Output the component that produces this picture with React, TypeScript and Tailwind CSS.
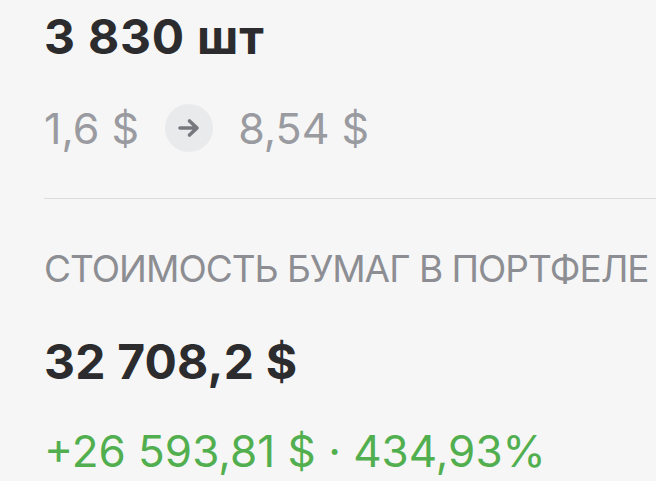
import React from 'react';

const App: React.FC = () => {
    return (
        <div className="min-h-screen w-full bg-[#f6f6f6] overflow-hidden font-['Inter','Noto_Sans',sans-serif]">
            <div className="pl-[44px] pt-[13px]">
                {/* Quantity */}
                <div className="text-[48px] leading-[48px] font-bold text-[#2c2c2e] tracking-[0.8px]">3 830 шт</div>

                {/* Price change */}
                <div className="mt-[43px] flex items-center h-[48px] text-[43px] text-[#9a9ba0]">
                    <span>1,6 $</span>
                    <span className="ml-[26px] mr-[25px] w-[48px] h-[48px] rounded-full bg-[#e9eaec] flex items-center justify-center">
                        <svg width="24" height="20" viewBox="0 0 24 20" fill="none">
                            <path d="M3 10h17M12.5 3 20 10l-7.5 7" stroke="#76787e" strokeWidth="3.6" strokeLinecap="round" strokeLinejoin="round" />
                        </svg>
                    </span>
                    <span>8,54 $</span>
                </div>

                {/* Divider */}
                <div className="mt-[46px] h-px bg-[#dcdcdf]" />

                {/* Portfolio value */}
                <div className="mt-[51px] text-[37px] leading-[37px] text-[#8d8e93] uppercase tracking-[-1px] whitespace-nowrap">Стоимость бумаг в портфеле</div>
                <div className="mt-[51px] text-[48px] leading-[48px] font-bold text-[#2c2c2e] tracking-[0.2px]">32 708,2 $</div>
                <div className="mt-[43px] text-[44px] leading-[44px] text-[#52af4f] whitespace-nowrap">+26 593,81 $ · 434,93%</div>
            </div>
        </div>
    );
};

export default App;
